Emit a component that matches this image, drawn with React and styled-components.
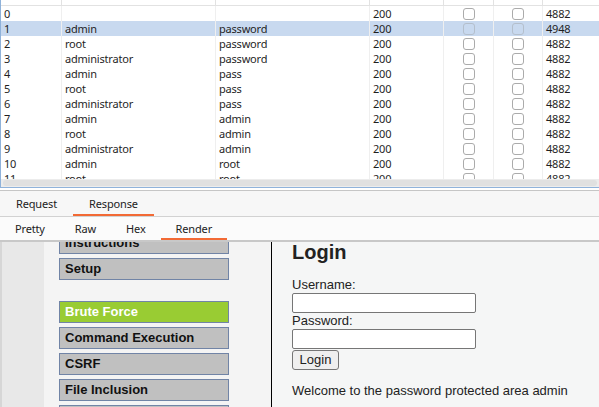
import React from 'react';
import styled, { createGlobalStyle } from 'styled-components';

const GlobalStyle = createGlobalStyle`
  html, body {
    margin: 0;
    padding: 0;
    background: #ffffff;
  }
  * {
    box-sizing: border-box;
  }
`;

const Screen = styled.div`
  width: 599px;
  height: 407px;
  overflow: hidden;
  display: flex;
  flex-direction: column;
  font-family: 'Noto Sans', 'Open Sans', sans-serif;
  color: #1f1f1f;
  background: #ffffff;
`;

// results table
const TablePanel = styled.div`
  height: 188px;
  flex: none;
  display: flex;
  flex-direction: column;
  border-left: 1px solid #8fb2da;
  border-bottom: 1px solid #8fb2da;
  overflow: hidden;
`;

const COLS = '60px 154px 154px 74px 50px 49px 1fr';

const HeaderRow = styled.div`
  display: grid;
  grid-template-columns: ${COLS};
  height: 6px;
  flex: none;
  border-bottom: 1px solid #e2e2e2;
`;

const HeaderCell = styled.div`
  border-left: ${(p) => (p.first ? 'none' : '1px solid #e2e2e2')};
`;

const Body = styled.div`
  flex: 1;
  overflow: hidden;
`;

const Row = styled.div`
  display: grid;
  grid-template-columns: ${COLS};
  height: 15px;
  background: ${(p) => (p.selected ? '#c8d9ef' : '#ffffff')};
  font-size: 11px;
  letter-spacing: -0.2px;
  line-height: 15px;
`;

const Cell = styled.div`
  padding: 0 3px;
  white-space: nowrap;
  overflow: hidden;
  border-left: ${(p) => (p.first ? 'none' : '1px solid #efefef')};
  display: flex;
  align-items: center;
  justify-content: ${(p) => (p.center ? 'center' : 'flex-start')};
`;

const Check = styled.span`
  display: block;
  width: 12px;
  height: 12px;
  border-radius: 3px;
  border: 1px solid ${(p) => (p.selected ? '#b4bfcc' : '#ababab')};
  background: ${(p) => (p.selected ? 'transparent' : '#ffffff')};
`;

const ScrollTrack = styled.div`
  height: 8px;
  flex: none;
  background: #ececec;
  padding: 1px 2px 1px 2px;
`;

const ScrollThumb = styled.div`
  height: 100%;
  border-radius: 4px;
  background: #e0e0e0;
`;

const Splitter = styled.div`
  height: 3px;
  flex: none;
  background: #ffffff;
  border-bottom: 1px solid #c6c6c6;
`;

// tabs
const TabBar = styled.div`
  display: flex;
  height: ${(p) => p.height}px;
  flex: none;
  background: ${(p) => p.bg};
  border-bottom: ${(p) => p.border};
`;

const Tab = styled.div`
  padding: 0 ${(p) => p.pad}px;
  display: flex;
  align-items: center;
  font-size: 11px;
  letter-spacing: -0.15px;
  color: #222;
  border-bottom: 2px solid ${(p) => (p.active ? '#f26a35' : 'transparent')};
  padding-top: 1px;
`;

// render view
const RenderView = styled.div`
  flex: 1;
  overflow: hidden;
  display: flex;
  font-family: 'Liberation Sans', Arial, sans-serif;
`;

const SideStrip = styled.div`
  width: 44px;
  flex: none;
  background: #e8e8e8;
  border-left: 2px solid #d6d6d6;
`;

const MenuPanel = styled.div`
  width: 228px;
  flex: none;
  background: #f4f4f4;
  border-right: 1px solid #000;
  padding-left: 15px;
`;

const Menu = styled.div`
  margin-top: -10px;
  display: flex;
  flex-direction: column;
`;

const MenuBlock = styled.div`
  display: flex;
  flex-direction: column;
  gap: 4px;
  margin-bottom: 21px;
`;

const MenuItem = styled.div`
  width: 170px;
  height: 22px;
  flex: none;
  border: 1px solid #7184a6;
  background: ${(p) => (p.active ? '#99cc33' : '#c0c0c0')};
  color: ${(p) => (p.active ? '#ffffff' : '#111')};
  font-weight: bold;
  font-size: 13px;
  line-height: 20px;
  padding-left: 5px;
  white-space: nowrap;
`;

const Main = styled.div`
  flex: 1;
  background: #f5f6f6;
  padding: 0 0 0 20px;
  color: #222;
`;

const Heading = styled.h1`
  margin: -1px 0 13px 0;
  font-size: 20px;
  line-height: 23px;
  font-weight: bold;
`;

const Label = styled.div`
  font-size: 13px;
  line-height: 16px;
`;

const Input = styled.div`
  width: 184px;
  height: 20px;
  background: #fff;
  border: 1px solid #767676;
  border-radius: 2px;
`;

const Button = styled.div`
  width: 47px;
  height: 20px;
  margin-top: 1px;
  background: #efefef;
  border: 1px solid #767676;
  border-radius: 3px;
  font-size: 13px;
  line-height: 18px;
  text-align: center;
`;

const Welcome = styled.p`
  margin: 13px 0 0 0;
  font-size: 13px;
  line-height: 16px;
`;

const rows = [
  ['0', '', ''],
  ['1', 'admin', 'password'],
  ['2', 'root', 'password'],
  ['3', 'administrator', 'password'],
  ['4', 'admin', 'pass'],
  ['5', 'root', 'pass'],
  ['6', 'administrator', 'pass'],
  ['7', 'admin', 'admin'],
  ['8', 'root', 'admin'],
  ['9', 'administrator', 'admin'],
  ['10', 'admin', 'root'],
  ['11', 'root', 'root'],
];

const App = () => {
  return (
    <>
      <GlobalStyle />
      <Screen>
        <TablePanel>
          <HeaderRow>
            {[0, 1, 2, 3, 4, 5, 6].map((i) => (
              <HeaderCell key={i} first={i === 0} />
            ))}
          </HeaderRow>
          <Body>
            {rows.map(([n, user, pass]) => {
              const selected = n === '1';
              return (
                <Row key={n} selected={selected}>
                  <Cell first>{n}</Cell>
                  <Cell>{user}</Cell>
                  <Cell>{pass}</Cell>
                  <Cell>200</Cell>
                  <Cell center>
                    <Check selected={selected} />
                  </Cell>
                  <Cell center>
                    <Check selected={selected} />
                  </Cell>
                  <Cell>{selected ? '4948' : '4882'}</Cell>
                </Row>
              );
            })}
          </Body>
          <ScrollTrack>
            <ScrollThumb />
          </ScrollTrack>
        </TablePanel>
        <Splitter />
        <TabBar height={26} bg="#f7f7f7" border="1px solid #d2d2d2">
          <Tab pad={16}>Request</Tab>
          <Tab pad={16} active>
            Response
          </Tab>
        </TabBar>
        <TabBar height={25} bg="#fbfbfb" border="2px solid #c8c8c8">
          <Tab pad={15}>Pretty</Tab>
          <Tab pad={15}>Raw</Tab>
          <Tab pad={15}>Hex</Tab>
          <Tab pad={15} active>
            Render
          </Tab>
        </TabBar>
        <RenderView>
          <SideStrip />
          <MenuPanel>
            <Menu>
              <MenuBlock>
                <MenuItem>Instructions</MenuItem>
                <MenuItem>Setup</MenuItem>
              </MenuBlock>
              <MenuBlock>
                <MenuItem active>Brute Force</MenuItem>
                <MenuItem>Command Execution</MenuItem>
                <MenuItem>CSRF</MenuItem>
                <MenuItem>File Inclusion</MenuItem>
                <MenuItem>SQL Injection</MenuItem>
              </MenuBlock>
            </Menu>
          </MenuPanel>
          <Main>
            <Heading>Login</Heading>
            <Label>Username:</Label>
            <Input />
            <Label>Password:</Label>
            <Input />
            <Button>Login</Button>
            <Welcome>Welcome to the password protected area admin</Welcome>
          </Main>
        </RenderView>
      </Screen>
    </>
  );
};

export default App;
